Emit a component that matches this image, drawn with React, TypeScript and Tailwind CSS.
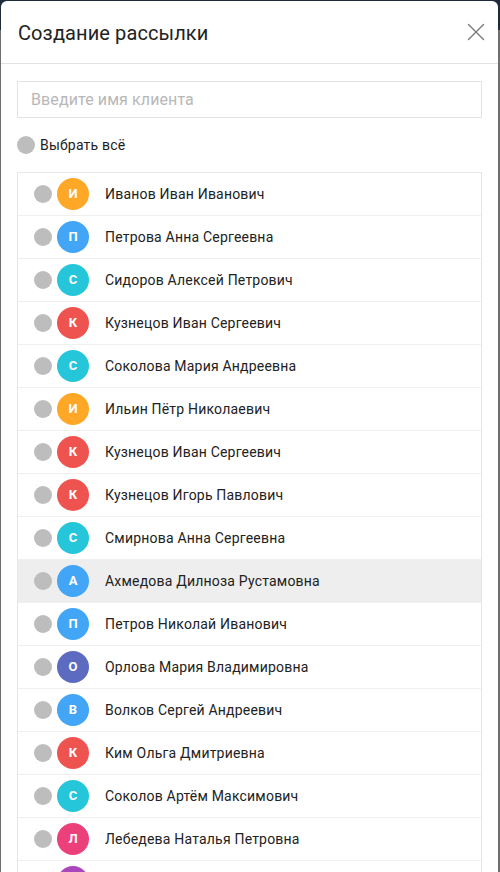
import { X } from 'lucide-react';

type Client = { name: string; color: string };

const clients: Client[] = [
  { name: 'Иванов Иван Иванович', color: 'bg-[#ffa726]' },
  { name: 'Петрова Анна Сергеевна', color: 'bg-[#42a5f5]' },
  { name: 'Сидоров Алексей Петрович', color: 'bg-[#26c6da]' },
  { name: 'Кузнецов Иван Сергеевич', color: 'bg-[#ef5350]' },
  { name: 'Соколова Мария Андреевна', color: 'bg-[#26c6da]' },
  { name: 'Ильин Пётр Николаевич', color: 'bg-[#ffa726]' },
  { name: 'Кузнецов Иван Сергеевич', color: 'bg-[#ef5350]' },
  { name: 'Кузнецов Игорь Павлович', color: 'bg-[#ef5350]' },
  { name: 'Смирнова Анна Сергеевна', color: 'bg-[#26c6da]' },
  { name: 'Ахмедова Дилноза Рустамовна', color: 'bg-[#42a5f5]' },
  { name: 'Петров Николай Иванович', color: 'bg-[#42a5f5]' },
  { name: 'Орлова Мария Владимировна', color: 'bg-[#5c6bc0]' },
  { name: 'Волков Сергей Андреевич', color: 'bg-[#42a5f5]' },
  { name: 'Ким Ольга Дмитриевна', color: 'bg-[#ef5350]' },
  { name: 'Соколов Артём Максимович', color: 'bg-[#26c6da]' },
  { name: 'Лебедева Наталья Петровна', color: 'bg-[#ec407a]' },
  { name: 'Морозова Елена Викторовна', color: 'bg-[#ab47bc]' },
];

const App = () => {
  return (
    <div
      className="h-[872px] overflow-hidden bg-[linear-gradient(to_bottom,#1e2b3a_0px,#1e2b3a_30px,#6e6e6e_30px)] pt-px pl-px pr-[2px]"
      style={{ fontFamily: 'Roboto, "Noto Sans", sans-serif' }}
    >
      <div className="h-full bg-white rounded-t-[6px] overflow-hidden">
        {/* Заголовок */}
        <div className="h-[63px] border-b border-[#e2e2e2] flex items-center justify-between pl-[17px] pr-[7px]">
          <h1 className="text-[20px] text-[#222] tracking-[0.1px] pt-[1px]">Создание рассылки</h1>
          <X className="w-[30px] h-[30px] text-[#7a7a7a]" strokeWidth={1.1} />
        </div>

        <div className="px-[16px] pt-[17px]">
          {/* Поиск */}
          <input
            placeholder="Введите имя клиента"
            className="w-full h-[37px] border border-[#e3e3e3] px-[13px] text-[16px] tracking-[0.1px] placeholder-[#b8b8b8] outline-none"
          />

          {/* Выбрать всё */}
          <div className="flex items-center h-[18px] mt-[18px] gap-[5px]">
            <span className="w-[18px] h-[18px] rounded-full bg-[#bdbdbd]" />
            <span className="text-[14px] text-[#222] tracking-[0.2px]">Выбрать всё</span>
          </div>

          {/* Список клиентов */}
          <div className="mt-[18px] border border-[#e6e6e6]">
            {clients.map((c, i) => (
              <div
                key={i}
                className={`h-[43px] flex items-center pl-[16px] border-b border-[#efefef] ${i === 9 ? 'bg-[#eeeeee]' : ''}`}
              >
                <span className="w-[18px] h-[18px] rounded-full bg-[#bdbdbd]" />
                <span
                  className={`ml-[5px] w-[32px] h-[32px] rounded-full ${c.color} flex items-center justify-center text-white text-[13px] font-bold`}
                >
                  {c.name[0]}
                </span>
                <span className="ml-[16px] text-[14px] text-[#222] tracking-[0.2px]">{c.name}</span>
              </div>
            ))}
          </div>
        </div>
      </div>
    </div>
  );
};

export default App;
